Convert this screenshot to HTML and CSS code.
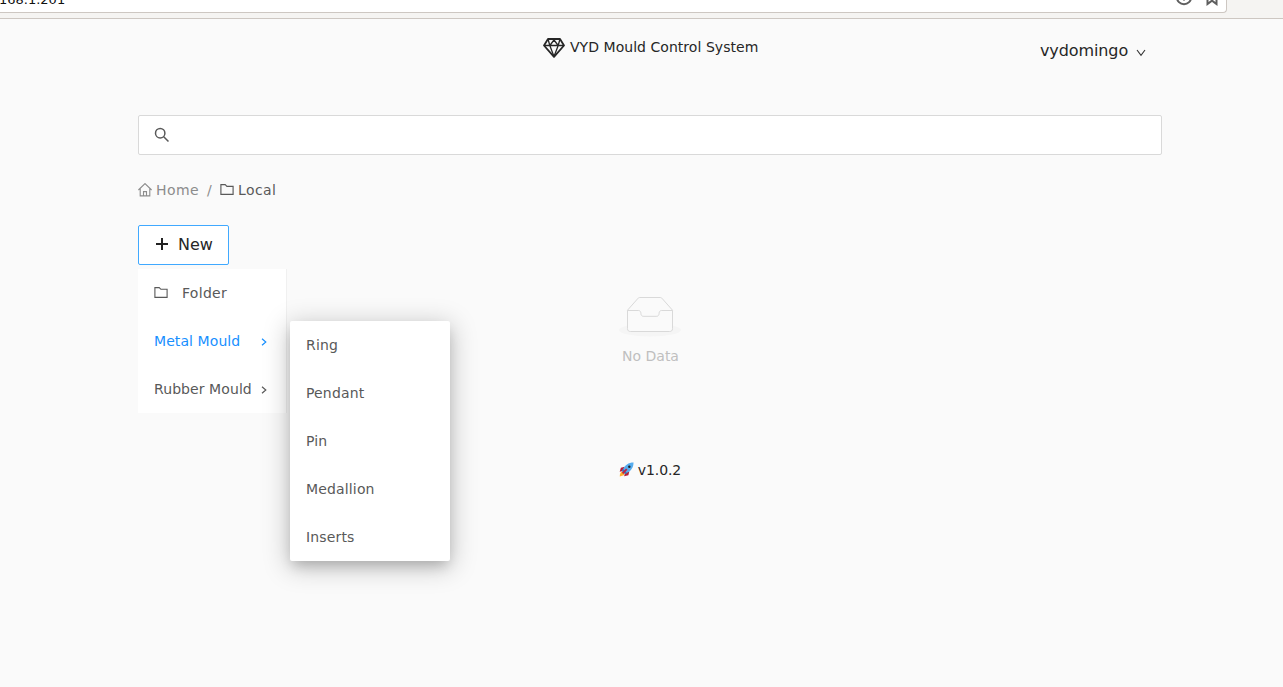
FILE: index.html
```html
<!DOCTYPE html>
<html lang="en">
<head>
<meta charset="utf-8">
<title>VYD Mould Control System</title>
<link rel="stylesheet" href="styles.css">
</head>
<body>
<div class="browser-bar">
  <div class="address">
    <span class="url">168.1.201</span>
    <svg class="address-icon" width="18" height="18" viewBox="0 0 18 18" fill="none" stroke="#5f5f5f" stroke-width="2"><circle cx="9" cy="9" r="7.2"/><path d="M9 4v8.500" /></svg>
    <svg class="address-icon" width="18" height="18" viewBox="0 0 18 18" fill="none" stroke="#5f5f5f" stroke-width="2"><path d="M4.500 2h9v14L9 12.600 4.500 16z"/></svg>
  </div>
</div>
<div class="page">
  <header class="header">
    <div class="brand">
      <svg width="22" height="20" viewBox="0 0 22 20" fill="none" stroke="#262626" stroke-width="1.800" stroke-linejoin="round"><path d="M5 1h12l4 6.500L11 18.800 1 7.500z"/><path d="M1 7.500h20M5 1l1.800 6.500L11 2l4.200 5.500L17 1M6.800 7.500l4.200 11 4.200-11" stroke-width="1.300"/></svg>
      <span>VYD Mould Control System</span>
    </div>
    <div class="user"><span>vydomingo</span><svg width="10" height="8" viewBox="0 0 10 8" fill="none" stroke="#333" stroke-width="1.100"><path d="M1 1l4 5.300L9 1"/></svg></div>
  </header>
  <div class="search">
    <svg width="16" height="16" viewBox="0 0 16 16" fill="none" stroke="#595959" stroke-width="1.500"><circle cx="6.200" cy="6.200" r="4.700"/><path d="M9.700 9.700l4.800 4.800"/></svg>
  </div>
  <nav class="crumbs">
    <svg class="home" width="14" height="14" viewBox="0 0 14 14" fill="none" stroke="currentColor" stroke-width="1.100"><path d="M.4 7L7 .6 13.600 7M2.200 5.700v7.200h9.600V5.700M5.500 12.700V8.600h3v4.100"/></svg>
    <span class="home">Home</span>
    <span class="slash">/</span>
    <svg class="folder" width="14" height="12" viewBox="0 0 14 12" fill="none" stroke="currentColor" stroke-width="1.150"><path d="M.9.600h4.300l1.700 1.700h6.200v8.100H.9z"/></svg>
    <span>Local</span>
  </nav>
  <main class="content">
    <div class="actions">
      <button class="new"><svg width="14" height="14" viewBox="0 0 14 14" stroke="#222" stroke-width="2"><path d="M7 1v12M1 7h12"/></svg><span>New</span></button>
      <ul class="menu">
        <li class="entry folder-entry"><svg class="entry-icon" width="14" height="12" viewBox="0 0 14 12" fill="none" stroke="currentColor" stroke-width="1.100"><path d="M.9.600h4.300l1.700 1.700h6.200v8.100H.9z"/></svg><span>Folder</span></li>
        <li class="entry active"><span>Metal Mould</span><svg class="arrow" width="6" height="8" viewBox="0 0 6 8" fill="none" stroke="currentColor" stroke-width="1.200"><path d="M1 .7L4.800 4 1 7.300"/></svg>
          <ul class="submenu">
            <li class="entry">Ring</li>
            <li class="entry">Pendant</li>
            <li class="entry">Pin</li>
            <li class="entry">Medallion</li>
            <li class="entry">Inserts</li>
          </ul>
        </li>
        <li class="entry"><span>Rubber Mould</span><svg class="arrow" width="6" height="8" viewBox="0 0 6 8" fill="none" stroke="currentColor" stroke-width="1.200"><path d="M1 .7L4.800 4 1 7.300"/></svg></li>
      </ul>
    </div>
    <div class="empty">
      <svg width="64" height="41" viewBox="0 0 64 41"><ellipse cx="31" cy="34" rx="31" ry="6.500" fill="#f5f5f5"/><g transform="translate(-.5 .5)" stroke="#d9d9d9" fill="#fafafa"><path d="M54 13.700L43.900 2.300C43.400 1.500 42.700 1 41.900 1H21.100c-.8 0-1.500.5-2 1.300L9 13.700V22h45z"/><path d="M40.600 16.900c0-1.600 1-2.900 2.200-2.900H54v18.100c0 2.200-1.300 2.900-3 2.900H12c-1.700 0-3-.8-3-2.900V14h11.200c1.200 0 2.200 1.300 2.200 2.900 0 1.600 1 2.900 2.200 2.900h13.800c1.200 0 2.200-1.300 2.200-2.900z"/></g></svg>
      <span>No Data</span>
    </div>
  </main>
  <footer class="footer">
    <svg width="15" height="15" viewBox="0 0 16 16"><path d="M6 5L2 6 .7 10.500l4-1zM11 10l-1 4-4.500 1.300L6.500 11z" fill="#b31e3c"/><path d="M.8 15.500c0-3 1-5 3-5s2.700 2 1.200 3.500z" fill="#ffb02e"/><path d="M15.500.5C10 .5 6.500 3 3.200 9.500l3.300 3.300C13 9.500 15.500 6 15.500.5z" fill="#55acee"/><path d="M3.200 9.500l3.300 3.300 2-1.200-4-4.200z" fill="#3574b5"/><circle cx="11" cy="5" r="1.300" fill="#20232a"/><path d="M3.800 12.200l4.500-4.600" stroke="#c5203f" stroke-width="2"/></svg>
    <span>v1.0.2</span>
  </footer>
</div>
</body>
</html>
```
FILE: styles.css
```css
* { box-sizing: border-box; }
body {
  margin: 0;
  height: 687px;
  overflow: hidden;
  background: #fafafa;
  color: #262626;
  font: 14px/22px "DejaVu Sans", sans-serif;
}
ul { margin: 0; padding: 0; list-style: none; }
svg { display: block; flex: none; }
.browser-bar {
  height: 19px;
  background: #f5f4f2;
  border-bottom: 1px solid #cdc7c2;
  overflow: hidden;
}
.address {
  display: flex;
  align-items: flex-end;
  width: 1227px;
  height: 13px;
  padding-right: 5px;
  background: #fff;
  border: solid #cdc7c2;
  border-width: 0 1px 1px 0;
  border-radius: 0 0 4px 0;
}
.url { flex: 1; margin-bottom: 1px; margin-left: -1px; color: #111; font-size: 13px; }
.address-icon { margin: 0 0 6px 10px; }
.page { width: 1024px; margin-left: 138px; }
.header { display: flex; height: 96px; }
.brand { display: flex; flex: none; gap: 5px; width: 497px; height: 22px; margin: 17px 0 0 405px; letter-spacing: .04px; }
.brand svg { margin-top: 2px; }
.user { display: flex; flex: none; gap: 8px; width: 122px; padding-top: 20px; font-size: 16px; line-height: 24px; letter-spacing: -.1px; }
.user svg { margin-top: 10px; }
.search {
  display: flex;
  align-items: center;
  height: 40px;
  padding-left: 15px;
  background: #fff;
  border: 1px solid #d9d9d9;
  border-radius: 2px;
}
.crumbs { display: flex; align-items: center; height: 22px; margin-top: 24px; color: #595959; letter-spacing: .4px; }
.crumbs svg { margin-right: 4px; }
.crumbs .home { color: #8c8c8c; }
.slash { margin: 0 8px; color: #8c8c8c; }
.content { display: flex; height: 188px; margin-top: 24px; }
.actions { width: 149px; }
.new {
  display: flex;
  align-items: center;
  gap: 9px;
  width: 91px;
  height: 40px;
  padding: 0 0 1px 16px;
  background: #fff;
  border: 1px solid #40a9ff;
  border-radius: 2px;
  color: #262626;
  font: 16px/24px "DejaVu Sans", sans-serif;
}
.new svg { margin-bottom: 1px; }
.new span { padding-top: 1px; }
.menu { margin-top: 4px; background: #fff; border-right: 1px solid #f0f0f0; color: #595959; letter-spacing: .08px; }
.entry { position: relative; display: flex; align-items: center; height: 48px; padding: 0 19px 0 16px; white-space: nowrap; }
.folder-entry { letter-spacing: .3px; }
.entry-icon { margin-right: 14px; }
.arrow { margin: 2px 0 0 auto; }
.active { color: #1890ff; }
.submenu {
  position: absolute;
  top: 4px;
  left: 152px;
  width: 160px;
  background: #fff;
  border-radius: 2px;
  box-shadow: 0 7px 12px -3px rgba(0,0,0,.18), 0 5px 26px 2px rgba(0,0,0,.22);
  color: #595959;
  letter-spacing: .15px;
}
.empty { display: flex; flex-direction: column; align-items: center; width: 727px; padding: 71px 0 0; color: #bfbfbf; }
.empty span { margin-top: 8px; }
.footer { display: flex; justify-content: center; gap: 4px; margin-top: 46px; letter-spacing: -.1px; }
.footer svg { margin-top: 3px; }
```
